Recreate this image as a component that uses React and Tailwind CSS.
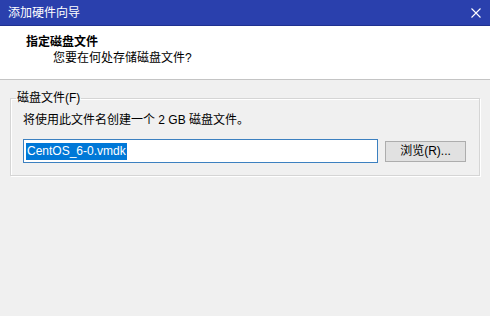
import React from "react";

const ui = { fontFamily: '"Liberation Sans", "Noto Sans CJK SC", sans-serif' };

function CloseIcon() {
  return (
    <svg width="10" height="10" viewBox="0 0 10 10" className="block">
      <path d="M0.5 0.5 L9.5 9.5 M9.5 0.5 L0.5 9.5" stroke="#ffffff" strokeWidth="1.1" fill="none" />
    </svg>
  );
}

export default function App() {
  return (
    <div className="w-[490px] h-[316px] bg-[#f0f0f0] text-black overflow-hidden" style={ui}>
      {/* Title bar */}
      <div className="h-[26px] bg-[#2a40ad] border-b border-[#1f3190] flex items-center justify-between pl-[8px] pr-[9px]">
        <span className="text-[12px] leading-[14px] text-white">添加硬件向导</span>
        <CloseIcon />
      </div>

      {/* Header */}
      <div className="h-[54px] bg-white border-b border-[#c4c4c4] pt-[8px]">
        <div className="pl-[26px] text-[12px] leading-[16px] font-bold">指定磁盘文件</div>
        <div className="pl-[53px] text-[12px] leading-[16px]">您要在何处存储磁盘文件?</div>
      </div>

      {/* Group box */}
      <fieldset className="mx-[10px] mt-[11px] border border-[#d5d5d5] shadow-[inset_1px_1px_0_#ffffff,1px_1px_0_#ffffff] pl-[5px] pr-[13px] pb-[12px]">
        <legend className="px-[1px] text-[12px] leading-[14px]">磁盘文件(F)</legend>
        <div className="pl-[7px]">
          <div className="mt-[8px] text-[12px] leading-[14px]">将使用此文件名创建一个 2 GB 磁盘文件。</div>
          <div className="mt-[12px] flex items-center gap-[7px]">
            <div className="w-[355px] h-[24px] bg-white border border-[#3c80c0] flex items-center pl-[2px]">
              <span className="bg-[#0078d7] text-white text-[12px] leading-[17px] px-[1px]">CentOS_6-0.vmdk</span>
            </div>
            <button className="w-[81px] h-[21px] bg-[#e1e1e1] border border-[#adadad] text-[12px] leading-[14px] text-black">
              浏览(R)...
            </button>
          </div>
        </div>
      </fieldset>
    </div>
  );
}
